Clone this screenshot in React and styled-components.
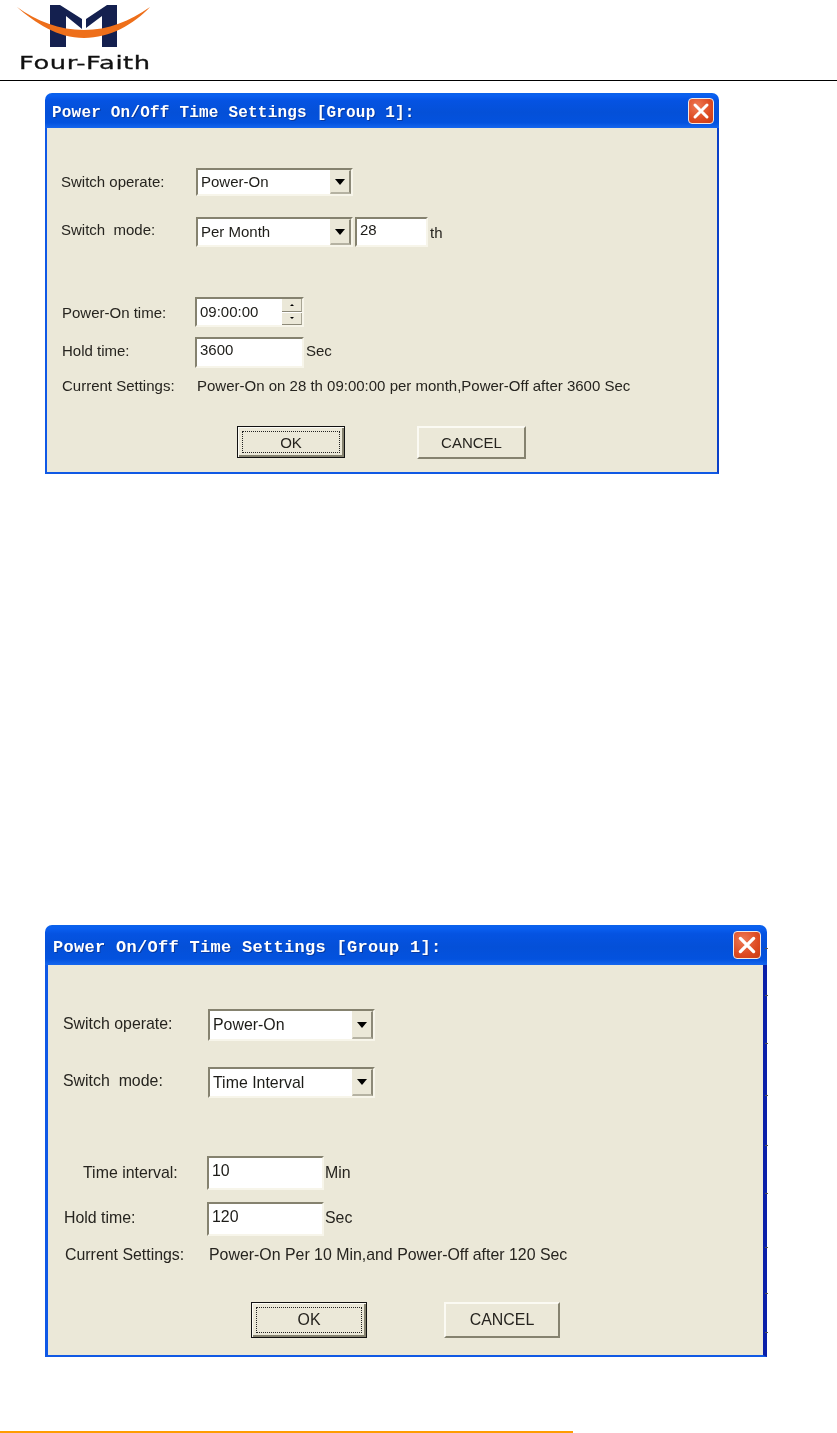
import React from "react";
import styled, { createGlobalStyle } from "styled-components";

const Global = createGlobalStyle`
  html, body { margin: 0; padding: 0; background: #fff; }
  #root { width: 837px; height: 1433px; overflow: hidden; }
`;
const Page = styled.div`
  width: 837px; height: 1433px; background: #fff; display: flex; flex-direction: column;
  font-family: "Liberation Sans", Arial, sans-serif; color: #26241f; filter: blur(0.35px);
`;
const Header = styled.header`
  height: 80px; flex: none; border-bottom: 1px solid #000; box-sizing: content-box;
  display: flex; padding-left: 16px;
`;
const Logo = styled.div`
  width: 140px; display: flex; flex-direction: column; align-items: flex-start;
`;
const LogoMark = styled.svg`width: 140px; height: 48px; flex: none; display: block;`;
const LogoText = styled.span`
  font-family: "DejaVu Sans", sans-serif; font-size: 18px; line-height: 20px; color: #111;
  letter-spacing: 0.4px; margin: 5px 0 0 3px; white-space: nowrap; -webkit-text-stroke: 0.3px #111;
  transform: scaleX(1.43); transform-origin: left center;
`;
const Dialog = styled.section`
  position: relative; flex: none; margin-left: 45px; margin-top: ${p => p.$mt}px;
  width: ${p => p.$w}px; height: ${p => p.$h}px; display: flex; flex-direction: column;
  font-size: ${p => p.$font}px; box-sizing: border-box;
`;
const TitleBar = styled.div`
  flex: none; height: ${p => p.$h}px; border-radius: 7px 7px 0 0; display: flex; align-items: center;
  justify-content: space-between; padding: 0 ${p => p.$pr}px 0 ${p => p.$pl}px;
  background: linear-gradient(#0b62ea 0%, #0a5ff0 8%, #0553e2 22%, #0450d8 55%, #0352de 85%, #1566ee 100%);
`;
const Title = styled.h2`
  margin: 4px 0 0 0; font-family: "Liberation Mono", monospace; font-weight: 700; color: #fff;
  font-size: ${p => p.$size}px; letter-spacing: ${p => p.$ls}px; white-space: nowrap;
  text-shadow: 1px 1px 0 #0a3aa0;
`;
const Close = styled.div`
  width: ${p => p.$s}px; height: ${p => p.$s}px; box-sizing: border-box; border: 1px solid #f2e8e4;
  border-radius: 4px; display: flex; align-items: center; justify-content: center;
  background: radial-gradient(circle at 35% 30%, #ee7a55, #dd4a22 60%, #c83c14);
`;
const Body = styled.div`
  flex: 1; min-height: 0; background: #ebe8d8; box-sizing: border-box; display: flex; flex-direction: column;
  border-left: ${p => p.$lw}px solid #0f58e6; border-bottom: 2px solid #1059e4;
  border-right: ${p => p.$rw}px solid ${p => p.$rc};
  padding: ${p => p.$pt}px 0 0 0;
`;
const Row = styled.div`
  display: flex; align-items: center; flex: none; height: ${p => p.$h}px; margin-top: ${p => p.$mt || 0}px;
`;
const Label = styled.span`
  flex: none; width: ${p => p.$w}px; padding-left: ${p => p.$pl}px; padding-bottom: ${p => p.$pb || 0}px;
  box-sizing: border-box; white-space: pre;
`;
const Inset = styled.div`
  flex: none; box-sizing: border-box; width: ${p => p.$w}px; height: 100%; margin-left: ${p => p.$ml || 0}px;
  background: #fff; display: flex; align-items: ${p => (p.$top !== undefined ? "flex-start" : "center")};
  justify-content: space-between; border: 2px solid; border-color: #85826f #f7f5ea #f7f5ea #85826f;
  padding: ${p => (p.$top !== undefined ? `${p.$top}px 0 0 3px` : "0 0 0 3px")}; color: #1d1c18; line-height: 22px;
`;
const ArrowButton = styled.div`
  flex: none; align-self: stretch; width: 21px; box-sizing: border-box; background: #ebe8d8; display: flex;
  align-items: center; justify-content: center; border-style: solid; border-color: #ebe8d8 #8c8978 #b5b2a2 #ebe8d8;
  border-width: 1px 2px 2px 1px;
  &::after { content: ""; border: 5px solid transparent; border-top: 6px solid #000; border-bottom: 0; }
`;
const Spinner = styled.div`
  flex: none; align-self: stretch; width: 20px; display: flex; flex-direction: column; gap: 1px;
`;
const SpinButton = styled.div`
  flex: 1; background: #ebe8d8; display: flex; align-items: center; justify-content: center;
  border-bottom: 1px solid #8c8978; border-right: 1px solid #a8a594;
  &::after {
    content: ""; border: 2px solid transparent; border-bottom: 0; border-top: 2px solid #000;
    transform: ${p => (p.$up ? "rotate(180deg)" : "none")};
  }
`;
const Unit = styled.span`margin-left: ${p => p.$ml ?? 2}px; padding-bottom: ${p => p.$pb || 0}px; white-space: nowrap;`;
const Value = styled.span`white-space: nowrap;`;
const Buttons = styled.div`
  display: flex; flex: none; margin-top: ${p => p.$mt}px; margin-left: ${p => p.$ml}px; gap: ${p => p.$gap}px;
`;
const Button = styled.div`
  box-sizing: border-box; width: ${p => p.$w}px; height: ${p => p.$h}px; display: flex; align-items: center;
  justify-content: center; background: #ebe8d8; color: #26241f;
  border: 2px solid; border-color: #fbfaf3 #85826f #85826f #fbfaf3;
`;
const DefaultButton = styled(Button)`
  border: 1px solid #111; box-shadow: inset 1px 1px 0 #fbfaf3, inset -2px -2px 0 #85826f; position: relative;
  &::before { content: ""; position: absolute; inset: 4px; border: 1px dotted #222; }
`;
const Ticks = styled.div`
  position: absolute; right: -1px; top: 0; bottom: 0; width: 3px; pointer-events: none;
`;
const Tick = styled.i`
  position: absolute; left: 0; width: 3px; height: 1px; background: #555; top: ${p => p.$y}px;
`;
const Footer = styled.div`
  flex: none; width: 573px; height: 2px; margin-top: ${p => p.$mt}px; background: #ff9c00;
`;

const X = ({ s }) => (
  <svg width={s} height={s} viewBox="0 0 20 20">
    <path d="M4 4 L16 16 M16 4 L4 16" stroke="#fff" strokeWidth="3" strokeLinecap="round" fill="none" />
  </svg>
);

export default function App() {
  return (
    <Page>
      <Global />
      <Header>
        <Logo>
          <LogoMark viewBox="16 0 140 48">
            <path fill="#14204f" d="M50 5 L60 5 L82 19 L82 29 L66 16 L66 47 L50 47Z" />
            <path fill="#14204f" d="M117 5 L107 5 L86 19 L86 28 L102 16 L102 47 L117 47Z" />
            <path fill="#ee6f1a" d="M17 7 C35 23 58 38 84 38 C110 38 134 24 150 7 C130 21 108 30 84 30 C60 30 36 21 17 7Z" />
          </LogoMark>
          <LogoText>Four-Faith</LogoText>
        </Logo>
      </Header>

      <Dialog $mt={12} $w={674} $h={381} $font={15}>
        <TitleBar $h={35} $pl={7} $pr={5}>
          <Title $size={16} $ls={0.2}>Power On/Off Time Settings [Group 1]:</Title>
          <Close $s={26}><X s={20} /></Close>
        </TitleBar>
        <Body $lw={2} $rw={2} $rc="#0a3fc8" $pt={40}>
          <Row $h={28}>
            <Label $w={149} $pl={14} $pb={2}>Switch operate:</Label>
            <Inset $w={157}>Power-On<ArrowButton /></Inset>
          </Row>
          <Row $h={30} $mt={21}>
            <Label $w={149} $pl={14} $pb={5}>Switch  mode:</Label>
            <Inset $w={157}>Per Month<ArrowButton /></Inset>
            <Inset $w={73} $ml={2} $top={0}>28</Inset>
            <Unit>th</Unit>
          </Row>
          <Row $h={30} $mt={50}>
            <Label $w={148} $pl={15}>Power-On time:</Label>
            <Inset $w={109}>09:00:00<Spinner><SpinButton $up /><SpinButton /></Spinner></Inset>
          </Row>
          <Row $h={31} $mt={10}>
            <Label $w={148} $pl={15} $pb={4}>Hold time:</Label>
            <Inset $w={109} $top={0}>3600</Inset>
            <Unit $pb={4}>Sec</Unit>
          </Row>
          <Row $h={20} $mt={7}>
            <Label $w={150} $pl={15}>Current Settings:</Label>
            <Value>Power-On on 28 th 09:00:00 per month,Power-Off after 3600 Sec</Value>
          </Row>
          <Buttons $mt={31} $ml={190} $gap={72}>
            <DefaultButton $w={108} $h={32}>OK</DefaultButton>
            <Button $w={109} $h={33}>CANCEL</Button>
          </Buttons>
        </Body>
      </Dialog>

      <Dialog $mt={451} $w={722} $h={432} $font={15.9}>
        <TitleBar $h={40} $pl={8} $pr={6}>
          <Title $size={17} $ls={0.3}>Power On/Off Time Settings [Group 1]:</Title>
          <Close $s={28}><X s={22} /></Close>
        </TitleBar>
        <Body $lw={3} $rw={4} $rc="#0a1fa8" $pt={44}>
          <Row $h={32}>
            <Label $w={160} $pl={15} $pb={2}>Switch operate:</Label>
            <Inset $w={167}>Power-On<ArrowButton /></Inset>
          </Row>
          <Row $h={31} $mt={26}>
            <Label $w={160} $pl={15} $pb={4}>Switch  mode:</Label>
            <Inset $w={167}>Time Interval<ArrowButton /></Inset>
          </Row>
          <Row $h={34} $mt={58}>
            <Label $w={159} $pl={35}>Time interval:</Label>
            <Inset $w={117} $top={2}>10</Inset>
            <Unit $ml={1}>Min</Unit>
          </Row>
          <Row $h={34} $mt={12}>
            <Label $w={159} $pl={16} $pb={2}>Hold time:</Label>
            <Inset $w={117} $top={2}>120</Inset>
            <Unit $ml={1} $pb={2}>Sec</Unit>
          </Row>
          <Row $h={20} $mt={9}>
            <Label $w={161} $pl={17}>Current Settings:</Label>
            <Value>Power-On Per 10 Min,and Power-Off after 120 Sec</Value>
          </Row>
          <Buttons $mt={37} $ml={203} $gap={77}>
            <DefaultButton $w={116} $h={36}>OK</DefaultButton>
            <Button $w={116} $h={36}>CANCEL</Button>
          </Buttons>
        </Body>
        <Ticks>
          {[23, 70, 118, 170, 220, 268, 322, 368, 407].map(y => <Tick key={y} $y={y} />)}
        </Ticks>
      </Dialog>

      <Footer $mt={74} />
    </Page>
  );
}
